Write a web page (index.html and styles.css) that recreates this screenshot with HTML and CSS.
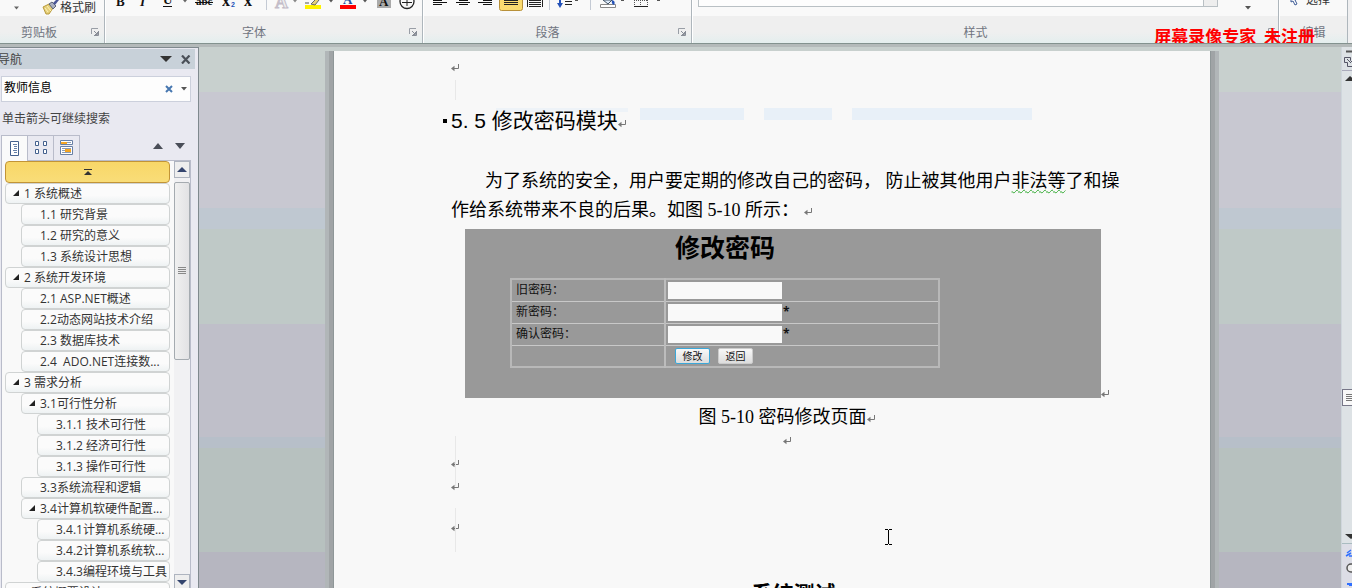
FILE: index.html
```html
<!DOCTYPE html>
<html lang="zh-CN">
<head>
<meta charset="utf-8">
<title>文档编辑</title>
<link rel="stylesheet" href="styles.css">
</head>
<body>
<svg class="defs" aria-hidden="true">
  <symbol id="ret" viewBox="0 0 8 8"><path d="M7.500 0v4.500H2" fill="none" stroke="#777"/><path d="M0 4.500L3.500 1.800v5.400z" fill="#777"/></symbol>
  <symbol id="launch" viewBox="0 0 8 8"><path d="M.5 6V.5H7" fill="none" stroke="#999ea6"/><path d="M3 3l3 3M7.500 3v4.500H3M6.500 4v2.500H4" fill="none" stroke="#888d96"/></symbol>
  <symbol id="drop" viewBox="0 0 6 4"><path d="M0 0h6L3 3.500z" fill="#555"/></symbol>
</svg>

<header class="ribbon">
  <section class="group clip">
    <div class="tools">
      <button class="cell w34" aria-label="粘贴选项"><svg width="6" height="16"><path d="M0 6.500h5L2.500 9.500z" fill="#666"/></svg></button>
      <button class="brush"><svg width="17" height="16" viewBox="0 0 17 16"><path d="M1 7l6-3 4 4-4 6-3 0z" fill="#e5cf7a" stroke="#b89a3c"/><path d="M3 8l3 4M5 6l4 5" stroke="#fff3b8"/><path d="M7 4l3-2 4 4-3 3z" fill="#a9afc0" stroke="#5d6579"/><path d="M11 3l4-4 2 1-4 5z" fill="#4a5798"/></svg>格式刷</button>
    </div>
    <div class="label">剪贴板<button class="launcher" aria-label="剪贴板设置"><svg width="8" height="8"><use href="#launch"/></svg></button></div>
  </section>
  <section class="group font">
    <div class="tools">
      <button class="cell w24" aria-label="加粗"><svg width="14" height="16"><text x="2" y="6" class="glyph bold">B</text></svg></button>
      <button class="cell w22" aria-label="倾斜"><svg width="14" height="16"><text x="3" y="6" class="glyph bold ital">I</text></svg></button>
      <button class="cell w26" aria-label="下划线"><svg width="14" height="16"><text x="2" y="4" class="glyph bold">U</text><path d="M2 6.500h9" stroke="#111"/></svg></button>
      <button class="cell w8" aria-label="下划线样式"><svg width="4" height="16"><path d="M0 0h4L2 2.500z" fill="#666"/></svg></button>
      <button class="cell w30" aria-label="删除线"><svg width="18" height="16"><text x="1" y="5" class="glyph small">abc</text><path d="M0 2.500h18" stroke="#111"/></svg></button>
      <button class="cell w20" aria-label="下标"><svg width="14" height="16"><text x="0" y="6" class="glyph cross">x</text><text x="9" y="7" class="sub">2</text></svg></button>
      <button class="cell w20" aria-label="上标"><svg width="14" height="16"><text x="2" y="6" class="glyph cross">x</text></svg></button>
      <span class="sep w14"></span>
      <button class="cell w18" aria-label="文本效果"><svg width="16" height="16"><text x="1" y="8" class="effect">A</text></svg></button>
      <button class="cell w8" aria-label="效果选项"><svg width="4" height="16"><path d="M0 0h4L2 2.500z" fill="#888"/></svg></button>
      <button class="cell w28" aria-label="突出显示"><svg width="16" height="16"><path d="M0 5h16v4H0z" fill="#fff200"/><path d="M6 4l5-5 3 1-4 5z" fill="#e5d27a" stroke="#666"/><path d="M0 3h4" stroke="#555"/></svg></button>
      <button class="cell w8" aria-label="突出显示选项"><svg width="4" height="16"><path d="M0 0h4L2 2.500z" fill="#555"/></svg></button>
      <button class="cell w26" aria-label="字体颜色"><svg width="16" height="16"><text x="3" y="4" class="glyph blue bold">A</text><path d="M0 5h16v4H0z" fill="red"/></svg></button>
      <button class="cell w8" aria-label="字体颜色选项"><svg width="4" height="16"><path d="M0 0h4L2 2.500z" fill="#555"/></svg></button>
      <button class="cell w30" aria-label="字符底纹"><svg width="14" height="16"><path d="M0 0h14v8H0z" fill="#aaa"/><text x="2" y="6" class="glyph bold">A</text></svg></button>
      <button class="cell w16" aria-label="带圈字符"><svg width="16" height="16"><circle cx="8" cy="1.500" r="7" fill="none" stroke="#222" stroke-width="1.300"/><path d="M3 2.500h10M8 0v6" stroke="#222"/></svg></button>
    </div>
    <div class="label">字体<button class="launcher" aria-label="字体设置"><svg width="8" height="8"><use href="#launch"/></svg></button></div>
  </section>
  <section class="group para">
    <div class="tools">
      <button class="cell w26" aria-label="左对齐"><svg width="14" height="16"><path d="M0 .5h9M0 2.500h14M0 4.500h9" stroke="#111"/></svg></button>
      <button class="cell w20" aria-label="居中"><svg width="14" height="16"><path d="M3 .5h9M0 2.500h14M3 4.500h9" stroke="#111"/></svg></button>
      <button class="cell w24" aria-label="右对齐"><svg width="14" height="16"><path d="M5 .5h9M0 2.500h14M5 4.500h9" stroke="#111"/></svg></button>
      <button class="cell w28" aria-label="两端对齐"><svg width="24" height="16"><path d="M.5-4V8.500a2 2 0 0 0 2 2h19a2 2 0 0 0 2-2V-4" fill="#fadb70" stroke="#b8913a"/><path d="M5 .5h14M5 2.500h14M5 4.500h14" stroke="#222"/></svg></button>
      <button class="cell w20" aria-label="分散对齐"><svg width="16" height="16"><path d="M2 .5h12M2 2.500h12M2 4.500h12M2 6.500h12M.5 0v7M15.500 0v7" stroke="#222"/></svg></button>
      <span class="sep w8"></span>
      <button class="cell w28" aria-label="行距"><svg width="22" height="16"><path d="M4 0v4" stroke="#2452b8" stroke-width="2"/><path d="M1 3h6L4 8z" fill="#2452b8"/><path d="M9 1.500h7M9 4.500h7" stroke="#222"/><path d="M19 0h3v1h-3z" fill="#555"/></svg></button>
      <span class="sep w18"></span>
      <button class="cell w18" aria-label="底纹"><svg width="16" height="16"><path d="M.5 4.500h15v3H.5z" fill="#fff" stroke="#888"/><path d="M3 0l5 4 4-4z" fill="#dceafa" stroke="#456"/><path d="M12 0q4 1 2 5-3-1-2-5" fill="#2452b8"/></svg></button>
      <button class="cell w10" aria-label="底纹选项"><svg width="4" height="16"><path d="M1 0h3v1H1z" fill="#555"/></svg></button>
      <button class="cell w28" aria-label="边框"><svg width="14" height="16"><path d="M.5 0v5M6.500 0v5M13.500 0v5M0 .5h14" stroke="#555" stroke-dasharray="1 1"/><path d="M0 6.500h14" stroke="#222"/></svg></button>
      <button class="cell w8" aria-label="边框选项"><svg width="4" height="16"><path d="M0 0h3v1H0z" fill="#555"/></svg></button>
    </div>
    <div class="label">段落<button class="launcher" aria-label="段落设置"><svg width="8" height="8"><use href="#launch"/></svg></button></div>
  </section>
  <section class="group styles">
    <div class="tools">
      <div class="gallery"><span></span></div>
      <button class="cell change" aria-label="更改样式"><svg width="6" height="16"><path d="M0 6h6L3 9.500z" fill="#555"/></svg></button>
    </div>
    <div class="label">样式<button class="launcher" aria-label="样式设置"><svg width="8" height="8"><use href="#launch"/></svg></button></div>
  </section>
  <section class="group edit">
    <div class="tools"><button class="choose"><svg width="10" height="12" viewBox="0 0 10 12"><path d="M1-2v10l2-1 2 4 2-1-2-4 3-1z" fill="#fff" stroke="#3d5b96"/></svg>选择</button></div>
    <div class="label">编辑</div>
  </section>
  <p class="stamp">屏幕录像专家&nbsp; 未注册</p>
</header>

<main class="work">
  <aside class="nav">
    <div class="nav-title"><h2>导航</h2>
      <button aria-label="任务窗格选项"><svg width="12" height="6"><path d="M0 0h12L6 6z" fill="#333"/></svg></button>
      <button aria-label="关闭"><svg width="10" height="9"><path d="M1 .5l7.500 8M8.500.5L1 8.500" stroke="#4a5058" stroke-width="2.200"/></svg></button>
    </div>
    <div class="search">
      <input type="text" value="教师信息" aria-label="搜索文档">
      <button aria-label="清除"><svg width="8" height="8"><path d="M1 1l6 6M7 1L1 7" stroke="#4777b0" stroke-width="2"/></svg></button>
      <button aria-label="搜索选项"><svg width="6" height="4"><use href="#drop"/></svg></button>
    </div>
    <p class="hint">单击箭头可继续搜索</p>
    <div class="tabs">
      <button class="tab on" aria-label="浏览标题"><svg width="10" height="16"><path d="M.5.5h8v14h-8z" fill="#fff" stroke="#44618e"/><path d="M3 3.500h4M4 5.500h3M4 7.500h3M3 9.500h4M4 11.500h3" stroke="#6680a8"/></svg></button>
      <button class="tab" aria-label="浏览页面"><svg width="12" height="14"><path d="M.5.500h3v4h-3zM8.500.500h3v4h-3zM.5 8.500h3v4h-3zM8.500 8.500h3v4h-3z" fill="#fff" stroke="#44618e"/></svg></button>
      <button class="tab" aria-label="浏览结果"><svg width="14" height="16"><path d="M.5.500h12v4H.5zM.5 6.500h12v8H.5z" fill="#fff" stroke="#6880a5"/><path d="M1 2h6v2H1zM5 9h6v3H5z" fill="#f5a623"/><path d="M7 2.500h4M2 8.500h9M2 10.500h3M2 12.500h9" stroke="#8c9cb5"/></svg></button>
      <span class="jump">
        <button aria-label="上一个"><svg width="10" height="6"><path d="M5 0l5 6H0z" fill="#4a4e58"/></svg></button>
        <button aria-label="下一个"><svg width="10" height="6"><path d="M0 0h10L5 6z" fill="#4a4e58"/></svg></button>
      </span>
    </div>
    <div class="tree-box">
      <ul class="tree">
        <li class="top"><button aria-label="跳转到顶部"><svg width="8" height="7"><path d="M0 .5h8" stroke="#333"/><path d="M4 2l4 4H0z" fill="#333"/></svg></button></li>
        <li class="l1 open"><a href="#">1 系统概述</a></li>
        <li class="l2"><a href="#">1.1 研究背景</a></li>
        <li class="l2"><a href="#">1.2 研究的意义</a></li>
        <li class="l2"><a href="#">1.3 系统设计思想</a></li>
        <li class="l1 open"><a href="#">2 系统开发环境</a></li>
        <li class="l2"><a href="#">2.1 ASP.NET概述</a></li>
        <li class="l2"><a href="#">2.2动态网站技术介绍</a></li>
        <li class="l2"><a href="#">2.3 数据库技术</a></li>
        <li class="l2"><a href="#">2.4 &nbsp;ADO.NET连接数...</a></li>
        <li class="l1 open"><a href="#">3 需求分析</a></li>
        <li class="l2 open"><a href="#">3.1可行性分析</a></li>
        <li class="l3"><a href="#">3.1.1 技术可行性</a></li>
        <li class="l3"><a href="#">3.1.2 经济可行性</a></li>
        <li class="l3"><a href="#">3.1.3 操作可行性</a></li>
        <li class="l2"><a href="#">3.3系统流程和逻辑</a></li>
        <li class="l2 open"><a href="#">3.4计算机软硬件配置...</a></li>
        <li class="l3"><a href="#">3.4.1计算机系统硬...</a></li>
        <li class="l3"><a href="#">3.4.2计算机系统软...</a></li>
        <li class="l3"><a href="#">3.4.3编程环境与工具</a></li>
        <li class="l1"><a href="#">4系统概要设计</a></li>
      </ul>
      <div class="bar">
        <button aria-label="向上滚动"><svg width="10" height="5"><path d="M5 0l5 5H0z" fill="#34456e"/></svg></button>
        <div class="thumb"><svg width="8" height="8"><path d="M0 .5h8M0 2.500h8M0 4.500h8M0 6.500h8" stroke="#888"/></svg></div>
        <button class="down" aria-label="向下滚动"><svg width="10" height="5"><path d="M0 0h10L5 5z" fill="#34456e"/></svg></button>
      </div>
    </div>
  </aside>

  <div class="desk">
    <article class="page">
      <i class="mark b1"></i><i class="mark b2"></i><i class="mark b3"></i><i class="mark b4"></i>
      <i class="rule r1"></i><i class="rule r2"></i><i class="rule r3"></i>
      <p class="empty first"><svg width="8" height="8"><use href="#ret"/></svg></p>
      <h1>5. 5 修改密码模块<svg width="8" height="8"><use href="#ret"/></svg></h1>
      <p class="body">为了系统的安全，用户要定期的修改自己的密码， 防止被其他用户<span class="wavy">非法等</span>了和操</p>
      <p class="body cont">作给系统带来不良的后果。如图 5-10 所示： <svg width="8" height="8"><use href="#ret"/></svg></p>
      <div class="figure">
        <form class="shot">
          <h3>修改密码</h3>
          <table>
            <tr><td><label for="old">旧密码：</label></td><td><input id="old" type="password"></td></tr>
            <tr><td><label for="new">新密码：</label></td><td><input id="new" type="password"><b>*</b></td></tr>
            <tr><td><label for="again">确认密码：</label></td><td><input id="again" type="password"><b>*</b></td></tr>
            <tr><td></td><td><div class="acts"><button type="button" class="focus">修改</button><button type="button">返回</button></div></td></tr>
          </table>
        </form>
        <svg width="8" height="8"><use href="#ret"/></svg>
      </div>
      <p class="caption">图 5-10 密码修改页面<svg width="8" height="8"><use href="#ret"/></svg></p>
      <p class="empty mid"><svg width="8" height="8"><use href="#ret"/></svg></p>
      <p class="empty"><svg width="8" height="8"><use href="#ret"/></svg></p>
      <p class="empty"><svg width="8" height="8"><use href="#ret"/></svg></p>
      <p class="empty gap"><svg width="8" height="8"><use href="#ret"/></svg></p>
      <h2 class="chapter">系统测试</h2>
      <svg class="ibeam" width="7" height="16"><path d="M0 .5h3M4 .5h3M3.500 1v14M0 15.500h3M4 15.500h3" stroke="#000"/></svg>
    </article>
  </div>

  <div class="vbar">
    <button class="ruler" aria-label="标尺"><svg width="10" height="18"><path d="M4 1.500h6" stroke="#555" stroke-width="2"/><path d="M2.500 7.500h6v3l3 3M2.500 7.500v5h3v4h6M5 9l4 4" fill="none" stroke="#556"/></svg></button>
    <button class="up" aria-label="向上滚动"><svg width="10" height="5"><path d="M8 0l6 5H3z" fill="#333"/></svg></button>
    <div class="grip"><svg width="8" height="8"><path d="M0 .5h8M0 2.500h8M0 4.500h8M0 6.500h8" stroke="#777"/></svg></div>
    <button class="dn" aria-label="向下滚动"><svg width="10" height="5"><path d="M3 0h12L9 5z" fill="#333"/></svg></button>
    <div class="browse"><svg width="10" height="42"><path d="M5 9l4-3M4 12l5-3M7 12h3" fill="none" stroke="#2f6fff" stroke-width="1.500"/><circle cx="9" cy="24" r="4" fill="#eee" stroke="#555" stroke-width="1.500"/><path d="M5 40h5M7 41h3" stroke="#2f6fff" stroke-width="2"/></svg></div>
  </div>
</main>
</body>
</html>
```
FILE: styles.css
```css
* { box-sizing: border-box; }
html, body { height: 100%; }
body {
  margin: 0;
  display: flex;
  flex-direction: column;
  overflow: hidden;
  font: 12px/16px "Open Sans", "Noto Sans CJK SC", sans-serif;
  color: #333;
}
p, h1, h2, h3, ul { margin: 0; padding: 0; font-weight: normal; }
ul { list-style: none; }
button { border: 0; padding: 0; background: none; font: inherit; color: inherit; display: flex; align-items: center; justify-content: center; }
svg { flex: none; }
.defs { position: absolute; width: 0; height: 0; }

/* Ribbon */
.ribbon {
  position: relative;
  flex: none;
  display: flex;
  height: 44px;
  overflow: hidden;
  background: #f0f0f1;
  border-bottom: 1px solid #83928f;
}
.group { display: flex; flex-direction: column; flex: none; border-right: 1px solid #aeb6bc; border-left: 1px solid #fff; }
.clip { width: 105px; border-left: 0; }
.font { width: 318px; }
.para { width: 269px; }
.styles { flex: 1; }
.edit { width: 69px; margin-right: 4px; }
.tools { display: flex; height: 16px; overflow: hidden; background: #f9f9f9; }
.font .tools, .para .tools { padding-left: 3px; }
.label {
  position: relative;
  flex: 1;
  display: flex;
  align-items: center;
  justify-content: center;
  padding: 6px 26px 0 0;
  color: #70757f;
  background: linear-gradient(#efefef 60%, #e4eeee);
}
.font .label, .para .label, .styles .label { padding-right: 20px; }
.edit .label { padding-right: 0; }
.launcher { position: absolute; right: 5px; top: 12px; }
.styles .launcher { right: 2px; }
.cell { height: 16px; flex: none; }
.sep { flex: none; background: linear-gradient(#c4cad4, #c4cad4) center top / 1px 10px no-repeat; }
.w8 { width: 8px; } .w10 { width: 10px; } .w14 { width: 14px; } .w16 { width: 16px; }
.w18 { width: 18px; } .w20 { width: 20px; } .w22 { width: 22px; } .w24 { width: 24px; }
.w26 { width: 26px; } .w28 { width: 28px; } .w30 { width: 30px; } .w34 { width: 34px; }
.brush { gap: 1px; margin-left: 8px; height: 15px; }
.glyph { font: 13px "Liberation Serif", serif; fill: #111; }
.bold { font-weight: bold; }
.ital { font-style: italic; }
.blue { fill: #254f9e; }
.small { font-size: 11px; font-weight: bold; }
.cross { font-size: 16px; font-weight: bold; }
.sub { font: bold 7px "Liberation Sans", sans-serif; fill: #2452b8; }
.effect { font: bold 18px "Liberation Serif", serif; fill: #eee; stroke: #c3bcc8; }
.gallery { flex: 1; height: 7px; margin-left: 5px; display: flex; justify-content: flex-end; border: solid #b9c0c4; border-width: 0 1px 1px; background: #fdfdfd; }
.gallery span { width: 14px; border-left: 1px solid #b9c0c4; background: #eee; }
.change { width: 60px; }
.choose { height: 12px; margin: -6px 0 0 10px; gap: 6px; }
.stamp {
  position: absolute;
  right: 37px;
  top: 25px;
  font: bold 17px/22px "Noto Sans CJK SC", sans-serif;
  color: #f00;
}

/* Work area */
.work { flex: 1; display: flex; min-height: 0; border-top: 3px solid #b4baba; background: #c8d0ce; }
.nav {
  flex: none;
  width: 199px;
  display: flex;
  flex-direction: column;
  border: solid #7f898e;
  border-width: 1px 1px 0 0;
  background: #e9e9f1;
}
.nav-title { display: flex; align-items: center; gap: 9px; height: 20px; margin: 1px 3px 0 0; padding-right: 4px; background: #c8d1d9; }
.nav-title h2 { flex: 1; font-size: 12px; line-height: 18px; padding-top: 2px; margin-left: -2px; color: #444; }
.search { display: flex; align-items: center; gap: 8px; height: 26px; margin: 7px 7px 0 1px; padding: 0 3px 0 2px; border: 1px solid #ccd0dc; background: #fdfdfd; }
.search input { flex: 1; min-width: 0; border: 0; padding: 0; background: none; font: inherit; color: #000; margin-bottom: 3px; }
.hint { margin: 9px 0 0 2px; color: #444; }
.tabs { display: flex; height: 26px; margin: 8px 7px 0 1px; border-bottom: 1px solid #b9bcca; }
.tab { width: 26px; height: 25px; border: solid #b9bcca; border-width: 1px 1px 0 0; }
.tab.on { width: 27px; height: 26px; border-left-width: 1px; background: #fafafa; }
.jump { flex: 1; display: flex; justify-content: flex-end; gap: 12px; padding: 0 6px 3px 0; }
.tree-box { flex: 1; min-height: 0; overflow: hidden; display: flex; margin: 0 7px 0 1px; border: solid #b9bcca; border-width: 0 1px; background: #f9f9f9; }
.tree { flex: 1; padding: 0 4px 0 3px; }
.tree li { position: relative; height: 21px; border: 1px solid #d0d3d3; border-radius: 4px; background: linear-gradient(#fbfbfb 60%, #eef2f3); line-height: 19px; white-space: nowrap; }
.tree a { color: #333; text-decoration: none; }
.tree .top { height: 22px; border-color: #c29436; background: linear-gradient(#f8d768, #f9dd78); }
.top button { width: 100%; height: 20px; }
.l1 { padding-left: 18px; }
.tree .l2 { margin-left: 16px; padding-left: 18px; }
.tree .l3 { margin-left: 32px; padding-left: 18px; }
.open::before { content: ""; position: absolute; left: 7px; top: 6px; border: solid transparent; border-width: 0 0 6px 6px; border-bottom-color: #222; }
.bar { width: 16px; display: flex; flex-direction: column; background: #f1f1f3; }
.bar button { height: 17px; margin-bottom: 4px; border: 1px solid #aeb4bf; background: #eee; flex: none; }
.thumb { height: 178px; flex: none; display: flex; align-items: center; justify-content: center; border: 1px solid #a5abb0; border-radius: 2px; background: linear-gradient(90deg, #f0f0f0, #e2e2e4); }
.bar .down { margin: auto 0 -3px; }

/* Document desk and page */
.desk {
  flex: 1;
  min-width: 0;
  padding: 4px 0 0 4px;
  background: linear-gradient(#c8d0ce 45px, #c8c8d1 45px 161px, #bfc8d1 161px 182px, #bfc9c7 182px 277px, #bfbfc9 277px 390px, #b7bfc9 390px 401px, #b7c1bf 401px 505px, #b6b6c0 505px);
}
.page {
  position: relative;
  width: 876px;
  height: 100%;
  margin: 0 auto;
  padding: 5px 88px 0 117px;
  background: #f8f8f8;
  box-shadow: 0 0 0 1px #8f9798, 0 0 0 5px #a0a4a6, 0 0 0 9px #b1b6b8;
  clip-path: inset(0 -12px);
  color: #000;
}
.empty { height: 23px; line-height: 23px; display: flex; align-items: center; }
.empty.first { height: 24px; }
.empty.mid { justify-content: center; }
.empty.gap { margin-top: 18px; }
.page h1 { position: relative; margin-top: 25px; font: 21px/32px "Liberation Sans", "Noto Sans CJK SC", sans-serif; white-space: nowrap; }
.page h1::before { content: ""; position: absolute; left: -8px; top: 14px; width: 4px; height: 4px; background: #000; }
.body, .caption { font: 18px/29px "Liberation Serif", "Noto Sans CJK SC", serif; white-space: nowrap; }
.body { margin-top: 30px; padding-left: 34px; height: 29px; }
.body.cont { margin-top: 0; padding-left: 0; }
.wavy { text-decoration: underline wavy #3a3 1px; text-underline-offset: 2px; }
.figure { display: flex; align-items: flex-end; margin: 4px 0 0 14px; }
.shot { width: 636px; height: 169px; flex: none; padding: 2px 161px 0 45px; background: #999; }
.shot h3 { text-align: center; font: bold 25px/30px "Noto Sans CJK SC", sans-serif; }
.shot table { width: 100%; margin-top: 17px; border-collapse: collapse; border: 2px solid #b8b8b8; table-layout: fixed; }
.shot td { height: 22px; padding: 0 2px; border: 1px solid #c8c8c8; line-height: 18px; color: #111; }
.shot td:first-child { width: 154px; border-right: 2px solid #bcbcbc; }
.shot label { margin-left: 2px; }
.shot input { width: 114px; height: 17px; border: 0; padding: 0; background: #f9f9f9; vertical-align: middle; }
.shot b { margin-left: 1px; }
.acts { display: flex; gap: 8px; padding-left: 7px; }
.acts button { width: 35px; height: 16px; border: 1px solid #ccc; border-radius: 2px; background: linear-gradient(#f8f8f8, #ddd); font-size: 10px; line-height: 14px; }
.acts .focus { border-color: #3ba7d8; }
.caption { margin-top: 5px; height: 26px; line-height: 28px; text-align: center; }
.chapter { margin-top: 41px; padding-left: 14px; text-align: center; font: bold 21px/24px "Noto Sans CJK SC", sans-serif; }
.ibeam { position: absolute; left: 551px; top: 478px; }
.mark { position: absolute; top: 57px; height: 12px; background: #e8f0f8; }
.b1 { left: 162px; width: 132px; height: 4px; opacity: .6; }
.b2 { left: 306px; width: 104px; }
.b3 { left: 430px; width: 68px; }
.b4 { left: 518px; width: 180px; }
.rule { position: absolute; left: 121px; width: 1px; background: #e8e8e8; }
.r1 { top: 29px; height: 20px; }
.r2 { top: 385px; height: 50px; }
.r3 { top: 457px; height: 44px; }

/* Right scroll bar */
.vbar { flex: none; width: 11px; display: flex; flex-direction: column; overflow: hidden; border-left: 1px solid #cfd6dc; background: #dde2e5; }
.vbar button, .vbar .grip { justify-content: flex-start; }
.ruler { height: 24px; border-bottom: 1px solid #aab; }
.up { height: 14px; }
.grip { display: flex; align-items: center; height: 17px; margin-top: 304px; padding-left: 3px; border: 1px solid #778; border-right: 0; background: #f8f8f8; }
.dn { height: 14px; margin-top: auto; }
.browse { height: 45px; border-top: 1px solid #a9bcc0; background: #dcdde6; }
```
